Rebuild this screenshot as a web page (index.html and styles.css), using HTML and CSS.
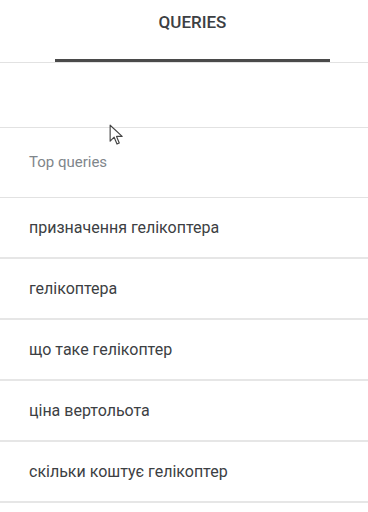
FILE: index.html
```html
<!DOCTYPE html>
<html lang="uk">
<head>
    <meta charset="UTF-8">
    <meta name="viewport" content="width=device-width, initial-scale=1.0">
    <title>Queries</title>
    <link rel="stylesheet" href="styles.css">
</head>
<body>
    <div class="tabs">
        <div class="tab active">QUERIES</div>
    </div>
    <div class="spacer"></div>
    <div class="list-head">Top queries</div>
    <ul class="queries">
        <li>призначення гелікоптера</li>
        <li>гелікоптера</li>
        <li>що таке гелікоптер</li>
        <li>ціна вертольота</li>
        <li>скільки коштує гелікоптер</li>
    </ul>

    <!-- курсор миші зі скриншота -->
    <svg class="cursor" width="16" height="23" viewBox="0 0 14 20">
        <path d="M1 1 L1 15 L4.5 11.5 L7 17.5 L9 16.6 L6.6 10.8 L11.5 10.8 Z" fill="#fff" stroke="#444" stroke-width="1" stroke-linejoin="round"/>
    </svg>
</body>
</html>
```

FILE: styles.css
```css
body {
    margin: 0;
    font-family: Roboto, "Noto Sans", Arial, sans-serif;
    background-color: #fff;
    color: #3c4043;
    position: relative;
}
.tabs {
    height: 62px;
    padding-left: 55px;
    border-bottom: 1px solid #e2e2e2;
    display: flex;
}
.tab {
    width: 275px;
    box-sizing: border-box;
    display: flex;
    justify-content: center;
    padding-top: 12px;
    font-size: 17px;
    font-weight: 500;
    color: #3c4043;
}
.tab.active {
    border-bottom: 3px solid #4a4a4a;
}
.spacer {
    height: 64px;
    border-bottom: 1px solid #e2e2e2;
}
.list-head {
    height: 70px;
    box-sizing: border-box;
    padding: 25px 0 0 29px;
    font-size: 15px;
    color: #80868b;
    border-bottom: 1px solid #e2e2e2;
}
.queries {
    list-style: none;
    margin: 0;
    padding: 0;
}
.queries li {
    height: 59px;
    display: flex;
    align-items: center;
    padding-left: 29px;
    font-size: 16px;
    border-bottom: 2px solid #e6e6e6;
}
.cursor {
    position: absolute;
    left: 109px;
    top: 124px;
}
```
